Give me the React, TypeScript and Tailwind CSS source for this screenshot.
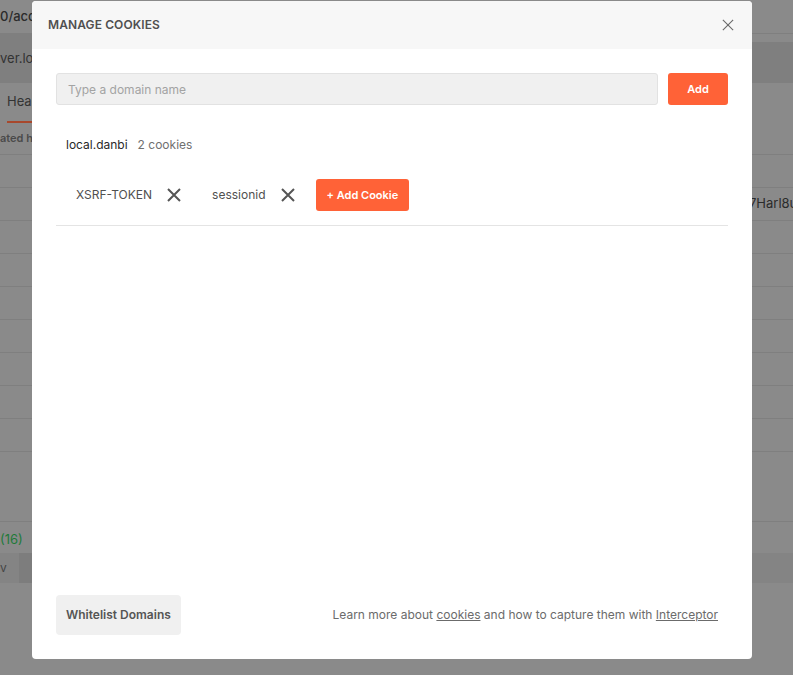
const XIcon = ({ className, strokeWidth = 2 }: { className?: string; strokeWidth?: number }) => (
  <svg viewBox="0 0 14 14" className={className} fill="none" stroke="currentColor" strokeWidth={strokeWidth} strokeLinecap="butt">
    <path d="M1 1L13 13M13 1L1 13" />
  </svg>
);

const BackgroundApp = () => {
  const rows = [0, 1, 2, 3, 4, 5, 6, 7, 8];
  return (
    <div className="flex flex-col w-full h-full text-[#2b2b2b]">
      <div className="h-[34px] border-b border-[#7f7f7f] flex items-center text-[13px] font-medium whitespace-nowrap">
        0/acc
      </div>
      <div className="h-[49px] flex">
        <div className="flex-1 bg-[#7f7f7f] flex items-center text-[13px] text-[#333] whitespace-nowrap">ver.local.danbi</div>
        <div className="w-[320px] pt-[8px] flex flex-col">
          <div className="flex-1 bg-[#7f7f7f]" />
        </div>
      </div>
      <div className="h-[40px] flex items-end pl-[7px]">
        <div className="h-full flex items-center border-b-2 border-[#a8482c] pr-6 text-[13px] text-[#333]">Headers</div>
      </div>
      <div className="h-[32px] border-b border-[#7f7f7f] flex items-center text-[11px] font-semibold text-[#4a4a4a] whitespace-nowrap">
        ated headers
      </div>
      {rows.map((r) => (
        <div key={r} className="h-[33px] border-b border-[#7f7f7f] flex items-center text-[13px] text-[#2b2b2b]">
          <div className="w-[749px] shrink-0" />
          {r === 1 && <span className="whitespace-nowrap">7Harl8u</span>}
        </div>
      ))}
      <div className="h-[70px] border-b border-[#7f7f7f]" />
      <div className="h-[31px] pt-[4px] flex items-center text-[13px] text-[#1f7a3a]">(16)</div>
      <div className="h-[30px] bg-[#848484] flex items-center text-[12px] text-[#444]">
        <span className="w-[19px]">v</span>
        <div className="w-[80px] h-full bg-[#7d7d7d]" />
      </div>
    </div>
  );
};

const CookieChip = ({ name }: { name: string }) => (
  <div className="flex items-center gap-[15px]">
    <span className="text-[12px] text-[#505050]">{name}</span>
    <XIcon className="w-[14px] h-[14px] text-[#555]" strokeWidth={2} />
  </div>
);

export default function App() {
  return (
    <div className="relative w-[793px] h-[675px] overflow-hidden bg-[#8a8a8a] font-['Inter',sans-serif]">
      <BackgroundApp />
      <div className="absolute left-[32px] top-[1px] w-[720px] h-[658px] bg-white rounded-[4px] flex flex-col overflow-hidden">
        <div className="h-[48px] bg-[#f7f7f7] flex items-center justify-between pl-4 pr-[18px]">
          <span className="text-[12px] font-semibold text-[#505050] tracking-[0.1px]">MANAGE COOKIES</span>
          <XIcon className="w-[12px] h-[12px] text-[#6b6b6b]" strokeWidth={1.3} />
        </div>
        <div className="px-6 pt-6 flex flex-col">
          <div className="flex gap-[10px] h-8">
            <input
              className="flex-1 h-8 bg-[#f0f0f0] border border-[#e2e2e2] rounded-[3px] px-[11px] text-[12px] text-[#333] placeholder:text-[#a3a3a3] outline-none"
              placeholder="Type a domain name"
            />
            <button className="w-[60px] h-8 bg-[#ff6237] rounded-[3px] text-white text-[11px] font-semibold">Add</button>
          </div>
          <div className="mt-[32px] pl-[10px] flex items-center gap-[10px] h-4">
            <span className="text-[12px] text-[#282828]">local.danbi</span>
            <span className="text-[12px] text-[#707070]">2 cookies</span>
          </div>
          <div className="mt-[26px] pl-5 flex items-center h-8 gap-[31px]">
            <CookieChip name="XSRF-TOKEN" />
            <CookieChip name="sessionid" />
            <button className="-ml-[10px] h-8 px-[11px] bg-[#ff6237] rounded-[3px] text-white text-[11px] font-semibold">
              + Add Cookie
            </button>
          </div>
          <div className="mt-[14px] border-b border-[#e4e4e4]" />
        </div>
        <div className="mt-auto px-6 pb-6 flex items-center justify-between">
          <button className="h-10 px-[10px] bg-[#f0f0f0] rounded-[4px] text-[12px] font-semibold text-[#555]">
            Whitelist Domains
          </button>
          <p className="pr-[10px] text-[12px] text-[#6b6b6b]">
            Learn more about <span className="underline">cookies</span> and how to capture them with{" "}
            <span className="underline">Interceptor</span>
          </p>
        </div>
      </div>
    </div>
  );
}
